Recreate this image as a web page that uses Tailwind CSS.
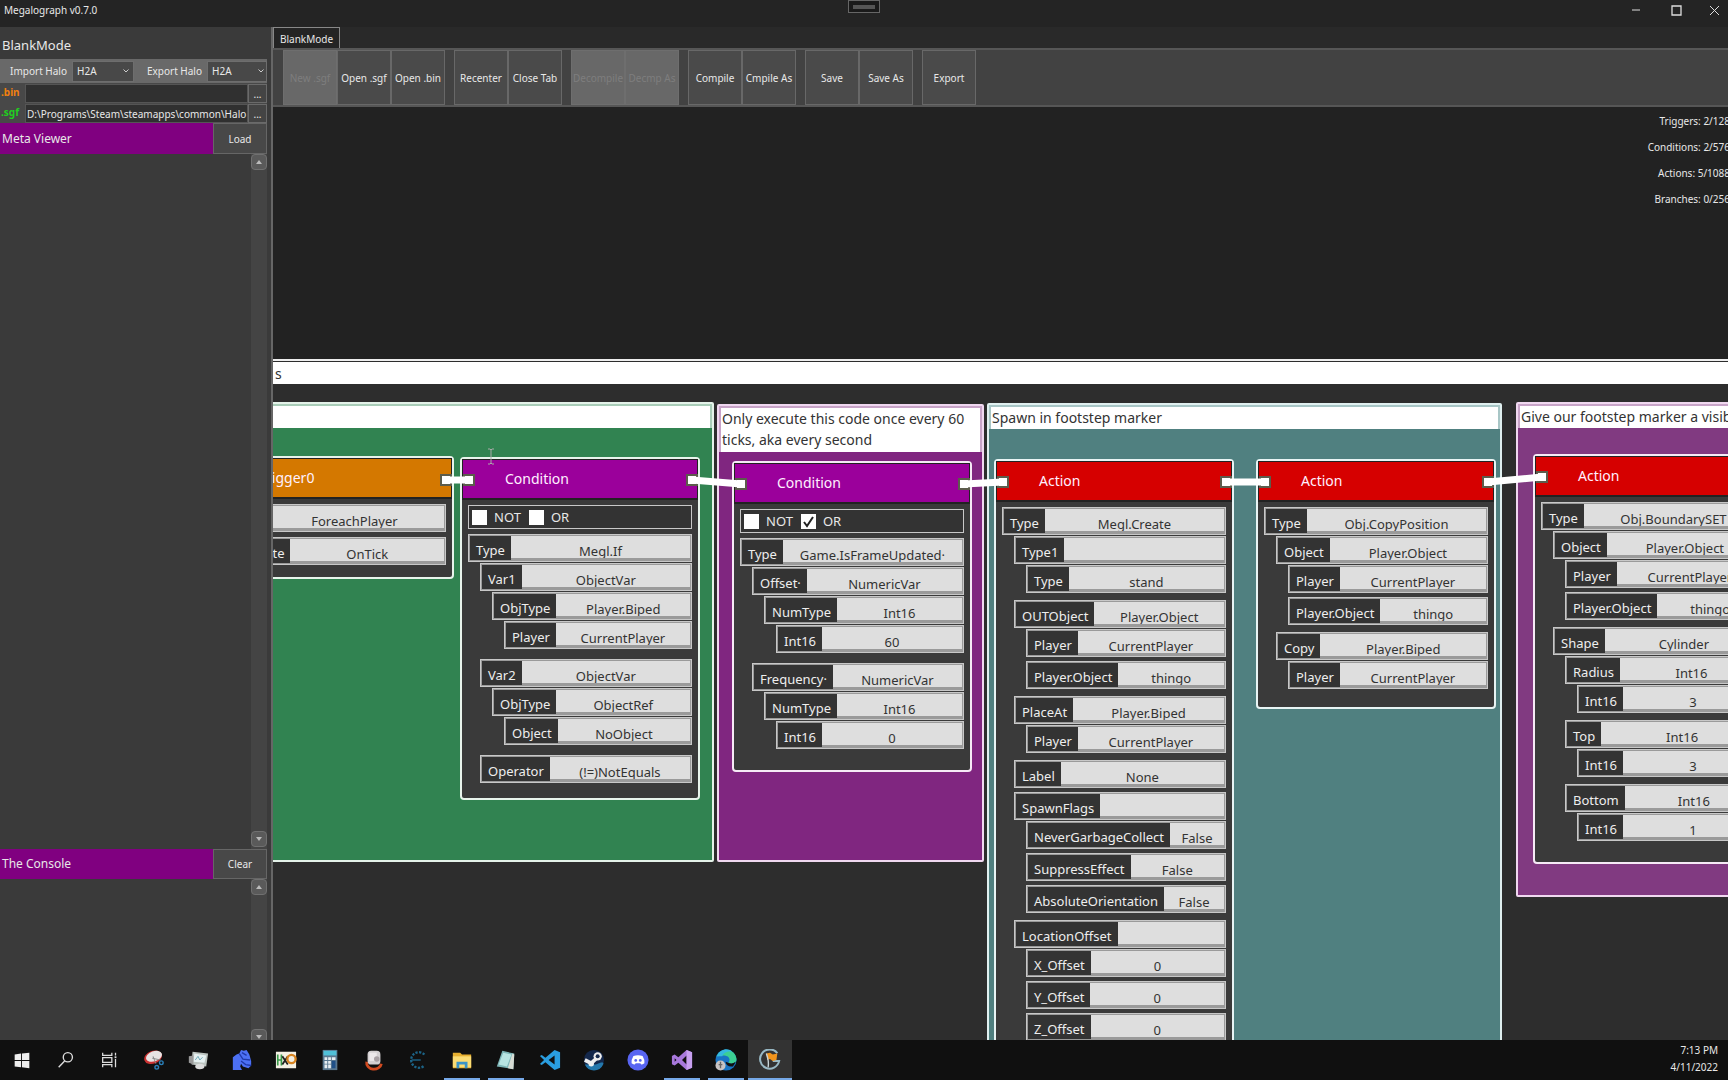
<!DOCTYPE html>
<html lang="en">
<head>
<meta charset="utf-8">
<title>Megalograph</title>
<script src="https://cdn.jsdelivr.net/npm/@tailwindcss/browser@4"></script>
</head>
<body class="flex h-screen flex-col overflow-hidden bg-[#242424] font-['Noto_Sans',sans-serif] text-[10px] leading-4 text-[#e8e8e8]">

<!-- Window title bar -->
<header class="flex h-[27px] shrink-0 items-start justify-between">
  <h1 class="w-1/3 pt-[2px] pl-1">Megalograph v0.7.0</h1>
  <div class="flex h-[13px] w-8 items-center justify-center border border-[#666] bg-[#1a1a1a]"><span class="h-1 w-[22px] bg-[#555]"></span></div>
  <div class="flex w-1/3 justify-end">
    <button aria-label="Minimize" class="flex h-5 w-10 items-center justify-center"><svg class="size-[10px]" viewBox="0 0 10 10"><path d="M1 5h8" stroke="#ddd"/></svg></button>
    <button aria-label="Maximize" class="flex h-5 w-10 items-center justify-center"><svg class="size-[11px]" viewBox="0 0 11 11"><path d="M1 1h9v9H1z" fill="none" stroke="#ddd" stroke-width="1.3"/></svg></button>
    <button aria-label="Close" class="flex h-5 w-8 items-center justify-center pl-1"><svg class="size-[11px]" viewBox="0 0 11 11"><path d="M1 1l9 9M10 1l-9 9" stroke="#ddd"/></svg></button>
  </div>
</header>

<main class="flex min-h-0 flex-1">
  <!-- Left panel -->
  <aside class="flex w-[273px] shrink-0 flex-col border-r-2 border-[#666] bg-[#3a3a3a] pr-1">
    <h2 class="h-8 pt-2 pl-[2px] text-[13px] leading-5">BlankMode</h2>
    <div class="flex h-[24px] items-center bg-[#696969]">
      <label for="imp" class="w-[72px] pr-[5px] text-right">Import Halo</label>
      <div class="relative h-[21px] w-[62px]">
        <select id="imp" class="h-full w-full appearance-none border border-[#6e6e6e] bg-[#484848] pl-1"><option>H2A</option></select>
        <svg class="pointer-events-none absolute top-[8px] right-[5px] h-1 w-[6px]" viewBox="0 0 6 4"><path d="M.5.5L3 3 5.500.5" fill="none" stroke="#ccc"/></svg>
      </div>
      <label for="exp" class="flex-1 pr-[5px] text-right">Export Halo</label>
      <div class="relative h-[21px] w-[60px]">
        <select id="exp" class="h-full w-full appearance-none border border-[#6e6e6e] bg-[#484848] pl-1"><option>H2A</option></select>
        <svg class="pointer-events-none absolute top-[8px] right-[3px] h-1 w-[6px]" viewBox="0 0 6 4"><path d="M.5.5L3 3 5.500.5" fill="none" stroke="#ccc"/></svg>
      </div>
    </div>
    <div class="flex h-[20px] items-stretch bg-[#484848] pt-px">
      <label for="bin" class="w-[25px] pl-px leading-4 font-bold text-[#f08010]">.bin</label>
      <input id="bin" class="min-w-0 flex-1 border border-[#555] bg-[#303030] px-px">
      <button aria-label="Browse bin" class="w-[19px] border border-[#6a6a6a] bg-[#444] leading-4">...</button>
    </div>
    <div class="flex h-[20px] items-stretch bg-[#484848] pt-px">
      <label for="sgf" class="w-[25px] pl-px leading-4 font-bold text-[#20d020]">.sgf</label>
      <input id="sgf" value="D:\Programs\Steam\steamapps\common\Halo" class="min-w-0 flex-1 border border-[#555] bg-[#303030] pl-px">
      <button aria-label="Browse sgf" class="w-[19px] border border-[#6a6a6a] bg-[#444] leading-4">...</button>
    </div>
    <div class="flex h-[31px] shrink-0">
      <h3 class="flex-1 bg-[#800080] pl-[2px] text-[12px] leading-8">Meta Viewer</h3>
      <button class="w-[54px] border border-[#666] bg-[#484848]">Load</button>
    </div>
    <section aria-label="Meta Viewer" class="flex flex-1 justify-end">
      <div class="flex w-4 flex-col justify-between bg-[#444]">
        <button aria-label="Scroll up" class="flex h-4 items-center justify-center rounded-sm border border-[#707070] bg-[#5a5a5a]"><svg class="h-1 w-[6px]" viewBox="0 0 6 4"><path d="M0 4L3 0l3 4z" fill="#bbb"/></svg></button>
        <button aria-label="Scroll down" class="mb-[2px] flex h-4 items-center justify-center rounded-sm border border-[#707070] bg-[#5a5a5a]"><svg class="h-1 w-[6px]" viewBox="0 0 6 4"><path d="M0 0l3 4 3-4z" fill="#bbb"/></svg></button>
      </div>
    </section>
    <div class="flex h-[30px] shrink-0">
      <h3 class="flex-1 bg-[#800080] pl-[2px] text-[12px] leading-[30px]">The Console</h3>
      <button class="w-[54px] border border-[#666] bg-[#484848]">Clear</button>
    </div>
    <section aria-label="Console" class="flex h-[161px] shrink-0 justify-end overflow-hidden">
      <div class="flex h-[166px] w-4 flex-col justify-between bg-[#444]">
        <button aria-label="Scroll up" class="flex h-4 items-center justify-center rounded-sm border border-[#707070] bg-[#5a5a5a]"><svg class="h-1 w-[6px]" viewBox="0 0 6 4"><path d="M0 4L3 0l3 4z" fill="#bbb"/></svg></button>
        <button aria-label="Scroll down" class="flex h-4 items-center justify-center rounded-sm border border-[#707070] bg-[#5a5a5a]"><svg class="h-1 w-[6px]" viewBox="0 0 6 4"><path d="M0 0l3 4 3-4z" fill="#bbb"/></svg></button>
      </div>
    </section>
  </aside>

  <div class="flex min-w-0 flex-1 flex-col">
    <nav class="flex h-[21px] shrink-0 bg-[#292929]">
      <a href="#graph" class="border border-b-0 border-[#888] bg-[#242424] px-[6px] leading-[22px]">BlankMode</a>
    </nav>
    <div role="toolbar" class="flex h-[59px] shrink-0 gap-[9px] border-y-2 border-[#565656] bg-[#424242] pl-[10px]" id="toolbar"></div>

    <!-- Graph canvas -->
    <section id="graph" class="relative flex-1 overflow-hidden bg-[#222] text-[14px]">
      <div class="absolute top-[252px] -left-1 h-[900px] w-[1600px] border-2 border-[#eee] bg-[#2d2d2d]">
        <input aria-label="Comment" value="s" class="mt-px block h-[22px] w-full bg-white px-1 text-[#333]">
      </div>

      <div class="absolute top-[295px] -left-[200px] h-[460px] w-[641px] rounded-xs border-2 border-[#e4f2e9] bg-[#318351]">
        <div class="bg-[#a9cdb8] px-[2px] pt-[2px]"><textarea aria-label="Comment" class="block h-[22px] w-full resize-none bg-white"></textarea></div>
      </div>
      <div class="absolute top-[297px] left-[444px] h-[458px] w-[267px] rounded-xs border-2 border-[#f0d8f0] bg-[#802680]">
        <div class="bg-[#c8a4c8] px-[2px] pt-[2px]"><textarea aria-label="Comment" class="block h-[44px] w-full resize-none overflow-hidden bg-white px-px leading-[21px] text-[#333]">Only execute this code once every 60 ticks, aka every second</textarea></div>
      </div>
      <div class="absolute top-[296px] left-[714px] h-[900px] w-[515px] rounded-xs border-2 border-[#e0f0f0] bg-[#508080]">
        <div class="bg-[#a8c6c6] px-[2px] pt-[2px]"><textarea aria-label="Comment" class="block h-[22px] w-full resize-none overflow-hidden bg-white px-px leading-[21px] text-[#333]">Spawn in footstep marker</textarea></div>
      </div>
      <div class="absolute top-[295px] left-[1243px] h-[495px] w-[520px] rounded-xs border-2 border-[#f0d8f0] bg-[#813a81]">
        <div class="bg-[#c8a4c8] px-[2px] pt-[2px]"><textarea aria-label="Comment" class="block h-[22px] w-full resize-none overflow-hidden bg-white px-px leading-[21px] text-[#333]">Give our footstep marker a visible boundary</textarea></div>
      </div>

      <article data-node="trigger" class="absolute top-[349px] -left-[59px] w-[240px] rounded-sm border-2 border-[#e8f4ec] bg-[#3a3a3a] pb-3"></article>
      <article data-node="cond1" class="absolute top-[350px] left-[187px] w-[240px] rounded-sm border-2 border-[#e8f4ec] bg-[#3a3a3a] pb-3"></article>
      <article data-node="cond2" class="absolute top-[354px] left-[459px] w-[240px] rounded-sm border-2 border-[#f6eaf6] bg-[#3a3a3a] pb-3"></article>
      <article data-node="act1" class="absolute top-[352px] left-[721px] w-[240px] rounded-sm border-2 border-[#e8f4f4] bg-[#3a3a3a] pb-3"></article>
      <article data-node="act2" class="absolute top-[352px] left-[983px] w-[240px] rounded-sm border-2 border-[#e8f4f4] bg-[#3a3a3a] pb-3"></article>
      <article data-node="act3" class="absolute top-[347px] left-[1260px] w-[240px] rounded-sm border-2 border-[#f6eaf6] bg-[#3a3a3a] pb-3"></article>

      <!-- Ports and links -->
      <svg class="pointer-events-none absolute top-0 left-0 h-[933px] w-[1500px]" viewBox="0 0 1500 933">
        <g fill="#fff" stroke="#5c5c4c" stroke-width="2">
          <path d="M168 368h10v10h-10zM191 368h10v10h-10zM414 368h10v10h-10zM463 372h10v10h-10zM686 372h10v10h-10zM725 370h10v10h-10zM948 370h10v10h-10zM987 370h10v10h-10zM1210 370h10v10h-10zM1264 365h10v10h-10z"/>
        </g>
        <g stroke="#fff" stroke-width="7">
          <path d="M172 373h25M419 373l49 4M691 377l39-2M953 375h39M1215 375l54-5"/>
        </g>
        <path d="M215 342h2l1 1 1-1h2M218 343v13M215 357h2l1-1 1 1h2" fill="none" stroke="#aaa"/>
      </svg>

      <div class="absolute top-[1px] -right-[2px] text-right text-[10px] leading-[26px] whitespace-nowrap">
        <div>Triggers: 2/128</div><div>Conditions: 2/576</div><div>Actions: 5/1088</div><div>Branches: 0/256</div>
      </div>
    </section>
  </div>
</main>

<!-- Windows taskbar -->
<footer class="flex h-10 shrink-0 justify-between bg-[#101010]">
  <div id="tasks" class="flex"></div>
  <div class="pt-[2px] pr-[10px] text-right leading-[17px]"><div>7:13 PM</div><div>4/11/2022</div></div>
</footer>

<script>
// Toolbar: groups of square buttons; a leading "-" marks a disabled one
const groups = [['-New .sgf','Open .sgf','Open .bin'],['Recenter','Close Tab'],['-Decompile','-Decmp As'],['Compile','Cmpile As'],['Save','Save As'],['Export']];
document.getElementById('toolbar').innerHTML = groups.map(g => '<div class="flex">' + g.map(b => b[0] === '-'
  ? `<button disabled class="w-[54px] border border-[#6e6e6e] bg-[#686868] whitespace-nowrap text-[#7e7e7e]">${b.slice(1)}</button>`
  : `<button class="w-[54px] border border-[#686868] bg-[#4a4a4a] whitespace-nowrap">${b}</button>`).join('') + '</div>').join('');

// Node fields: [label, value, children]
const player = ['Player','CurrentPlayer'], thingo = ['Player.Object','thingo'];
const int = (n, v, t = 'Int16') => [n, t, [['Int16', v]]];
const nodes = {
  trigger: {title:'Trigger0', color:'bg-[#d47800]', rows:[['Type','ForeachPlayer'],['Attribute','OnTick']]},
  cond1: {title:'Condition', color:'bg-[#9b009b]', flags:[false,false], rows:[['Type','Megl.If',[
    ['Var1','ObjectVar',[['ObjType','Player.Biped',[player]]]],
    ['Var2','ObjectVar',[['ObjType','ObjectRef',[['Object','NoObject']]]]],
    ['Operator','(!=)NotEquals']]]]},
  cond2: {title:'Condition', color:'bg-[#9b009b]', flags:[false,true], rows:[['Type','Game.IsFrameUpdated·',[
    ['Offset·','NumericVar',[int('NumType','60')]],
    ['Frequency·','NumericVar',[int('NumType','0')]]]]]},
  act1: {title:'Action', color:'bg-[#d60000]', rows:[['Type','Megl.Create',[
    ['Type1','',[['Type','stand']]],
    ['OUTObject','Player.Object',[player,thingo]],
    ['PlaceAt','Player.Biped',[player]],
    ['Label','None'],
    ['SpawnFlags','',[['NeverGarbageCollect','False'],['SuppressEffect','False'],['AbsoluteOrientation','False']]],
    ['LocationOffset','',[['X_Offset','0'],['Y_Offset','0'],['Z_Offset','0']]]]]]},
  act2: {title:'Action', color:'bg-[#d60000]', rows:[['Type','Obj.CopyPosition',[
    ['Object','Player.Object',[player,thingo]],
    ['Copy','Player.Biped',[player]]]]]},
  act3: {title:'Action', color:'bg-[#d60000]', rows:[['Type','Obj.BoundarySET',[
    ['Object','Player.Object',[player,thingo]],
    ['Shape','Cylinder',[int('Radius','3'),int('Top','3'),int('Bottom','1')]]]]]}
};
let uid = 0;
function row([label, value, kids]) {
  const id = 'f' + (++uid);
  const control = /^\d+$/.test(value) || value === 'thingo'
    ? `<input id="${id}" value="${value}" class="block h-[29px] w-full text-center">`
    : `<button id="${id}" class="block h-[29px] w-full text-center">${value}</button>`;
  return `<div><div class="flex h-7 border border-[#c8c8c8] bg-[#9a9a9a] p-px">
    <label for="${id}" class="h-6 shrink-0 bg-[#333] px-[6px] leading-[29px] text-[#eee]">${label}</label>
    <div class="h-[22px] min-w-0 flex-1 overflow-hidden bg-[#dedede] text-[#333]">${control}</div></div>` +
    (kids ? `<div class="flex flex-col gap-1 pt-px pb-[3px] pl-3">${kids.map(row).join('')}</div>` : '') + '</div>';
}
const tick = (label, on) => `<label class="flex items-center gap-[7px]"><span class="relative size-[15px]"><input type="checkbox" ${on ? 'checked' : ''} class="block size-[15px] appearance-none bg-white">${on ? '<svg class="pointer-events-none absolute top-0 left-0 size-[15px]" viewBox="0 0 15 15"><path d="M3 8l3 4 6-9" fill="none" stroke="#222" stroke-width="2"/></svg>' : ''}</span>${label}</label>`;
document.querySelectorAll('[data-node]').forEach(el => {
  const n = nodes[el.dataset.node];
  el.innerHTML = `<h4 class="h-[41px] border border-b-2 border-[#222] pl-[42px] leading-[38px] text-[#fff0ff] ${n.color}">${n.title}</h4>
    <div class="flex flex-col gap-[5px] px-[6px] pt-[5px] text-[13px]">` +
    (n.flags ? `<div class="flex h-6 items-center gap-2 border border-[#c8c8c8] bg-[#333] pl-[3px]">${tick('NOT', n.flags[0])}${tick('OR', n.flags[1])}</div>` : '') +
    n.rows.map(row).join('') + '</div>';
});

// Taskbar icons: [name, state, drawing on a 24x24 grid]
const apps = [
 ['Start','','<path d="M4 6l7-1v7H4zM12 5l8-1v8h-8zM4 13h7v7l-7-1zM12 13h8v8l-8-1z" fill="#eee"/>'],
 ['Search','','<circle cx="14" cy="9" r="5" fill="none" stroke="#ddd" stroke-width="1.500"/><path d="M10.500 13L4 20" stroke="#ddd" stroke-width="1.500"/>'],
 ['Task View','','<path d="M4 4v3h10V4M4 20v-3h10v3M4 9.500h10v5H4zM18 4v3M18 11v9" fill="none" stroke="#ddd" stroke-width="1.400"/><path d="M17 8h2v2h-2z" fill="#ddd"/>'],
 ['Snipping Tool','','<ellipse cx="11" cy="9" rx="10" ry="7" transform="rotate(-20 11 9)" fill="#c33"/><ellipse cx="12" cy="8" rx="9" ry="5.500" transform="rotate(-20 12 8)" fill="#e8e4e4"/><path d="M11 8l3 8M10 10l9 2" stroke="#888"/><circle cx="15" cy="20" r="2" fill="none" stroke="#2a7fb8" stroke-width="1.500"/><circle cx="20" cy="15" r="2" fill="none" stroke="#2a7fb8" stroke-width="1.500"/>'],
 ['Monitor','','<path d="M6 3l17 2-2 14-16-2z" fill="#bcc4c0"/><path d="M8 5l13 2-2 8-12-1z" fill="#e6f1f1"/><path d="M9 12l3-4 2 4 3-3" stroke="#68a6b6" fill="none"/><path d="M2 8l5-1v10l-5-2z" fill="#999"/><ellipse cx="14" cy="19" rx="5" ry="3" fill="#ddd"/>'],
 ['Assembly','','<path d="M2 23V9l4-3 3-1 2-4 3 1 3-1 3 5 2 7v5l-3 3-6-2-2-3-1 3 2 4z" fill="#4c70f4"/><path d="M9 5l4 6 8 1M11 13l5 4 6 1M12 4l5 3" stroke="#2038a8" stroke-width="1.400" fill="none"/>'],
 ['HxD','','<path d="M1 3h22v18H1z" fill="#f4f0e4"/><path d="M3 6v12M3 12h4M7 6v12" stroke="#3a9a4a" stroke-width="1.800"/><path d="M8 8l6 9M14 8l-6 9" stroke="#222" stroke-width="2"/><circle cx="18" cy="11" r="4.500" fill="none" stroke="#d88420" stroke-width="2.500"/>'],
 ['Calculator','','<path d="M4 1h16v22H4z" fill="#5a7890"/><path d="M5 2h14v5H5z" fill="#50c0d8"/><path d="M6 9h3v3H6zM10 9h3v3h-3zM14 9h4v3h-4zM6 13h3v3H6zM10 13h3v3h-3zM6 17h3v4H6zM10 17h3v4h-3z" fill="#e8eef2"/><path d="M14 13h4v8h-4z" fill="#205088"/>'],
 ['Disk Tool','','<path d="M4 14a8 7 0 0016 2" fill="none" stroke="#d04a20" stroke-width="3"/><rect x="5" y="2" width="14" height="15" rx="4" fill="#d4d0d2"/><path d="M7 4h8v9H7z" fill="#ece8ea"/><circle cx="15" cy="11" r="3" fill="#a8a0a4"/>'],
 ['Cheat Engine','','<path d="M19 6A8.500 8.500 0 1019 18" fill="none" stroke="#1c6488" stroke-width="2.500" stroke-dasharray="2.500 1.500"/><path d="M5 12h10" stroke="#1c6488" stroke-width="1.500"/>'],
 ['File Explorer','run','<path d="M2 4h8l2 2h10v15H2z" fill="#e8b030"/><path d="M2 8h20v12H2z" fill="#fbdc74"/><path d="M6 21v-7h12v7h-3v-4H9v4z" fill="#3a94c8"/>'],
 ['Notepad','run','<path d="M8 2l13 3-1 17-18-3z" fill="#7eb6b8"/><path d="M9 4l9 2-5 13-9-2z" fill="#b8e4e2"/><path d="M19 5l2 1-1 16-6-1z" fill="#d8dcd4"/>'],
 ['Visual Studio Code','','<path d="M17 1l6 2.500v17L17 23 7 14.500 3 17.500l-2-1.200L5.500 12 1 7.700l2-1.200 4 3zM17 7l-6.500 5 6.500 5z" fill="#2a9ee0" fill-rule="evenodd"/>'],
 ['Steam','','<circle cx="12" cy="12" r="11" fill="#14284c"/><path d="M2 17a11 11 0 0020 0c2-5-8 0-8 0z" fill="#2478ac"/><path d="M2 12l7 3.500 7-6.500" stroke="#eee" stroke-width="4" fill="none"/><circle cx="16" cy="8" r="4.500" fill="#eee"/><circle cx="16" cy="8" r="2.200" fill="#14284c"/><circle cx="9" cy="16" r="3" fill="#eee"/>'],
 ['Discord','','<circle cx="12" cy="12" r="11.500" fill="#5865f2"/><path d="M7 7.500q5-1.500 10 0 2.500 4 2 8-2 1.500-3.500 1.500l-1-1.500h-5l-1 1.500Q7 17 5 15.500q-.5-4 2-8z" fill="#fff"/><circle cx="9.500" cy="12.500" r="1.500" fill="#5865f2"/><circle cx="14.500" cy="12.500" r="1.500" fill="#5865f2"/>'],
 ['Visual Studio','run','<path d="M17 1l6 2.500v17L17 23l-9-8-4 3-3-1.500v-9L4 6l4 3zM17 7l-5 5 5 5zM4 10v4l2-2z" fill="#a878dc" fill-rule="evenodd"/><path d="M17 1l6 2.500v17L17 23z" fill="#c8a0f0"/>'],
 ['Edge','run','<circle cx="12" cy="12" r="11.500" fill="#1874c4"/><path d="M2 8C6-2 22-1 23.500 11c0 5-5 6-9 4 3-3 1-8-5-8-4 0-6 1-7.500 1z" fill="#3ccf94"/><path d="M2 8C6-2 16-1 19 3c-5-1-10 1-11 5z" fill="#34b8e0"/><path d="M14.500 15q4 2 8-1-1 3-3 5-7 1-8-5z" fill="#101010"/><circle cx="6" cy="18" r="5.500" fill="#c8c4c4"/><path d="M6 14v7M4 17h4" stroke="#666" stroke-width="1.500"/>'],
 ['Megalograph','active','<path d="M20 4.500A10.500 10.500 0 1022 13h-7" fill="none" stroke="#98b8c4" stroke-width="2.200"/><path d="M8 5l4-1 3 2 5-1-1 7-4 1-3-2-3 1z" fill="#f0941c"/><path d="M8 5q3 8 2 15" stroke="#c8d4d8" stroke-width="1.500" fill="none"/>']
];
document.getElementById('tasks').innerHTML = apps.map(([n, s, d]) =>
  `<button aria-label="${n}" class="flex w-11 flex-col items-center justify-between ${s === 'active' ? 'bg-[#333]' : ''}">
   <svg class="mt-2 size-6 shrink-0 p-px" viewBox="0 0 24 24">${d}</svg>
   <span class="h-[2px] ${s === 'active' ? 'w-full bg-[#76a9e8]' : s ? 'w-9 bg-[#76a9e8]' : 'w-9'}"></span></button>`).join('');
</script>
</body>
</html>
